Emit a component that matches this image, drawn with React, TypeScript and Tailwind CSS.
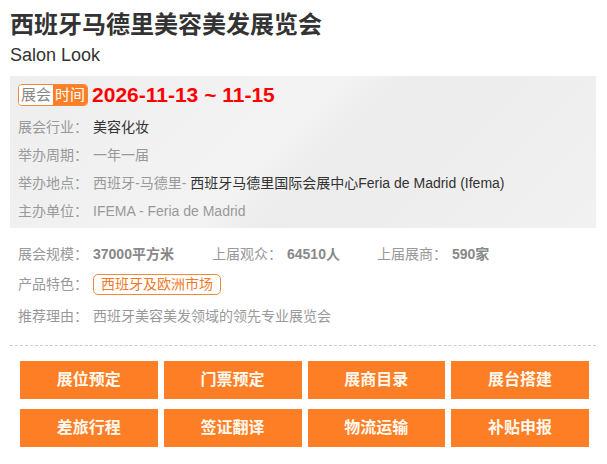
import React from "react";

const font = { fontFamily: '"Liberation Sans", "Noto Sans CJK SC", sans-serif' };

function Row({ label, children }: { label: string; children: React.ReactNode }) {
  return (
    <div className="flex h-[28px] items-center text-[14px]">
      <span className="w-[75px] shrink-0 text-[#999]">{label}</span>
      <span>{children}</span>
    </div>
  );
}

export default function App() {
  const buttons = ["展位预定", "门票预定", "展商目录", "展台搭建", "差旅行程", "签证翻译", "物流运输", "补贴申报"];
  return (
    <div className="w-[607px] h-[464px] bg-white px-[10px] pt-[10px]" style={font}>
      <div className="w-[586px]">
        <div className="h-[30px] flex items-center text-[24px] font-bold text-[#333]">西班牙马德里美容美发展览会</div>
        <div className="h-[22px] mt-[4px] flex items-center text-[18px] text-[#333]">Salon Look</div>
        <div className="mt-[10px] bg-[#efefef] bg-[linear-gradient(135deg,#eeeeee_0%,#f3f3f3_45%,#ececec_55%,#f1f1f1_100%)] px-[8px] pt-[5px] pb-[3px]">
          <div className="flex h-[28px] items-center mb-[4px]">
            <div className="flex h-[22px] items-stretch rounded-[4px] border border-[#f08a3a] overflow-hidden text-[15px]">
              <span className="flex items-center bg-white px-[2px] text-[#888]">展会</span>
              <span className="flex items-center bg-[#fd7e24] px-[2px] text-white">时间</span>
            </div>
            <span className="ml-[4px] text-[21px] font-bold text-[#ff0000]">2026-11-13 ~ 11-15</span>
          </div>
          <Row label="展会行业：">
            <span className="text-[#333]">美容化妆</span>
          </Row>
          <Row label="举办周期：">
            <span className="text-[#999]">一年一届</span>
          </Row>
          <Row label="举办地点：">
            <span className="text-[#999]">西班牙-马德里- </span>
            <span className="text-[#333]">西班牙马德里国际会展中心Feria de Madrid (Ifema)</span>
          </Row>
          <Row label="主办单位：">
            <span className="text-[#999]">IFEMA - Feria de Madrid</span>
          </Row>
        </div>
        <div className="px-[8px] pt-[11px] pb-[14px] border-b border-dashed border-[#ccc]">
          <div className="flex h-[30px] items-center text-[14px]">
            <span className="w-[75px] shrink-0 text-[#999]">展会规模：</span>
            <span className="w-[119px] font-bold text-[#888]">37000平方米</span>
            <span className="w-[75px] shrink-0 text-[#999]">上届观众：</span>
            <span className="w-[90px] font-bold text-[#888]">64510人</span>
            <span className="w-[75px] shrink-0 text-[#999]">上届展商：</span>
            <span className="font-bold text-[#888]">590家</span>
          </div>
          <div className="flex h-[30px] items-center text-[14px]">
            <span className="w-[75px] shrink-0 text-[#999]">产品特色：</span>
            <span className="flex h-[21px] items-center rounded-[5px] border border-[#f08a3a] px-[7px] text-[#f07a2a]">西班牙及欧洲市场</span>
          </div>
          <div className="mt-[2px] flex h-[30px] items-center text-[14px]">
            <span className="w-[75px] shrink-0 text-[#999]">推荐理由：</span>
            <span className="text-[#999]">西班牙美容美发领域的领先专业展览会</span>
          </div>
        </div>
        <div className="mx-[10px] mt-[15px] grid grid-cols-4 gap-x-[6px] gap-y-[10px] w-[569px]">
          {buttons.map((b) => (
            <div key={b} className="flex h-[38px] items-center justify-center bg-[#fd7e24] text-[16px] font-bold text-[#fff8ee]">
              {b}
            </div>
          ))}
        </div>
      </div>
    </div>
  );
}
